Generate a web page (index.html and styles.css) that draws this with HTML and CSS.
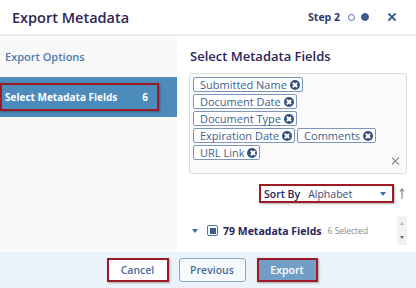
FILE: index.html
```html
<!DOCTYPE html>
<html lang="en">
<head>
  <meta charset="UTF-8"/>
  <title>Export Metadata</title>
  <link rel="stylesheet" href="styles.css">
</head>
<body>
<header class="top">
  <h1>Export Metadata</h1>
  <div class="steps">
    <span class="step-label">Step 2</span>
    <span class="dot"></span>
    <span class="dot on"></span>
    <span class="close"></span>
  </div>
</header>

<div class="content">
  <!-- left wizard nav -->
  <aside class="sidebar">
    <div class="nav-item">Export Options</div>
    <div class="nav-band">
      <div class="nav-active">
        <span>Select Metadata Fields</span>
        <span>6</span>
      </div>
    </div>
  </aside>

  <main class="panel">
    <h2>Select Metadata Fields</h2>

    <div class="tag-box">
      <div class="tags">
        <span class="chip">Submitted Name <i class="x"></i></span>
        <span class="chip">Document Date <i class="x"></i></span>
        <span class="chip">Document Type <i class="x"></i></span>
        <span class="chip">Expiration Date <i class="x"></i></span>
        <span class="chip">Comments <i class="x"></i></span>
        <span class="chip">URL Link <i class="x"></i></span>
      </div>
      <span class="clear"></span>
    </div>

    <div class="sort-row">
      <div class="sort">
        <b>Sort By</b>
        <span class="sort-val">Alphabet</span>
        <span class="caret"></span>
      </div>
      <svg class="sort-dir" width="6" height="12" viewBox="0 0 6 12">
        <path d="M3 1 V11 M1 3.5 L3 1 L5 3.5" stroke="#888" stroke-width="1.2" fill="none"/>
      </svg>
    </div>

    <div class="tree-row">
      <span class="caret tree-caret"></span>
      <span class="check"><span></span></span>
      <b class="count">79 Metadata Fields</b>
      <span class="selected">6 Selected</span>
      <div class="scroll">
        <span class="up"></span>
        <span class="down"></span>
      </div>
    </div>
  </main>
</div>

<footer class="bottom">
  <button class="btn cancel">Cancel</button>
  <button class="btn prev">Previous</button>
  <button class="btn export">Export</button>
</footer>
</body>
</html>
```

FILE: styles.css
```css
body {
  margin: 0;
  width: 416px;
  height: 288px;
  overflow: hidden;
  font-family: 'Open Sans', sans-serif;
  color: #2b2a55;
  background: #fff;
}

.top {
  height: 34px;
  border-bottom: 2px solid #e9edf3;
  display: flex;
  align-items: center;
  justify-content: space-between;
  padding: 0 20px 0 12px;
}

.top h1 {
  margin: 0;
  font-size: 14.5px;
  font-weight: 600;
  color: #2a2656;
}

.steps {
  display: flex;
  align-items: center;
  gap: 6px;
}

.step-label {
  font-size: 10.5px;
  font-weight: 700;
  color: #2f3a66;
  margin-right: 2px;
}

.dot {
  width: 7px;
  height: 7px;
  border: 1px solid #4a6e9c;
  border-radius: 50%;
  box-sizing: border-box;
}

.dot.on {
  background: #3d5f8e;
  border-color: #3d5f8e;
  width: 8px;
  height: 8px;
}

.close {
  width: 8px;
  height: 8px;
  margin-left: 13px;
  position: relative;
}

.close::before,
.close::after,
.clear::before,
.clear::after {
  content: '';
  position: absolute;
  left: 3px;
  top: -1px;
  width: 2.2px;
  height: 10px;
  background: #3d5f8e;
  transform: rotate(45deg);
}

.close::after,
.clear::after {
  transform: rotate(-45deg);
}

.content {
  display: flex;
  height: 216px;
}

.sidebar {
  width: 177px;
  background: #f9f9f9;
  padding-top: 13px;
}

.nav-item {
  font-size: 11px;
  font-weight: 600;
  line-height: 16px;
  color: #5079b0;
  padding-left: 5px;
}

.nav-band {
  margin-top: 12px;
  height: 40px;
  background: #4c8bbb;
  padding-top: 6px;
  box-sizing: border-box;
}

.nav-active {
  width: 159px;
  height: 28px;
  box-sizing: border-box;
  border: 2px solid #9a1b24;
  box-shadow: 1px 1px 2px rgba(0,0,0,0.3);
  display: flex;
  align-items: center;
  justify-content: space-between;
  padding: 0 9px 0 3px;
  color: #fff;
  font-size: 10px;
  font-weight: 700;
}

.panel {
  flex: 1;
  padding: 11px 9px 0 12px;
}

.panel h2 {
  margin: 0 0 0 1px;
  font-size: 13px;
  font-weight: 600;
  line-height: 19px;
  color: #2a2656;
}

.tag-box {
  margin-top: 7px;
  height: 101px;
  box-sizing: border-box;
  border: 1px solid #dcdcdc;
  border-radius: 3px;
  background: #fafafa;
  padding: 3px 3px;
  position: relative;
}

.tags {
  display: flex;
  flex-wrap: wrap;
  gap: 2px 2px;
  width: 185px;
}

.chip {
  height: 15px;
  box-sizing: border-box;
  border: 1px solid #7d97bb;
  border-radius: 2px;
  background: #fff;
  font-size: 11px;
  line-height: 13px;
  color: #3f5f8d;
  padding: 0 2px 0 6px;
  display: flex;
  align-items: center;
  gap: 3px;
  white-space: nowrap;
}

.x {
  width: 10px;
  height: 10px;
  border-radius: 50%;
  background: #34507c;
  position: relative;
}

.x::before,
.x::after {
  content: '';
  position: absolute;
  left: 4.3px;
  top: 2px;
  width: 1.6px;
  height: 6px;
  background: #fff;
  transform: rotate(45deg);
}

.x::after {
  transform: rotate(-45deg);
}

.clear {
  position: absolute;
  right: 7px;
  bottom: 8px;
  width: 8px;
  height: 8px;
}

.clear::before,
.clear::after {
  background: #7a7a7a;
  width: 1.3px;
  left: 3.5px;
}

.sort-row {
  display: flex;
  justify-content: flex-end;
  align-items: center;
  gap: 5px;
  margin-top: 10px;
}

.sort {
  width: 135px;
  height: 19px;
  box-sizing: border-box;
  border: 2px solid #9a1b24;
  box-shadow: 1px 1px 2px rgba(0,0,0,0.3);
  display: flex;
  align-items: center;
  padding: 0 6px 0 3px;
  font-size: 10.5px;
  background: #fff;
}

.sort b {
  font-weight: 600;
  color: #2a2656;
}

.sort-val {
  margin-left: 8px;
  flex: 1;
  color: #3d4d75;
}

.caret {
  width: 0;
  height: 0;
  border-left: 3px solid transparent;
  border-right: 3px solid transparent;
  border-top: 4px solid #3b6aa5;
}

.sort-dir {
  margin-right: 2px;
}

.tree-row {
  display: flex;
  align-items: center;
  margin-top: 13px;
  padding-left: 3px;
  height: 29px;
}

.tree-caret {
  border-top-color: #2f6db2;
  margin-right: 9px;
}

.check {
  width: 11px;
  height: 11px;
  box-sizing: border-box;
  border: 1px solid #4d74a8;
  border-radius: 2px;
  display: flex;
  align-items: center;
  justify-content: center;
  margin-right: 5px;
}

.check span {
  width: 6px;
  height: 6px;
  background: #3a5d90;
}

.count {
  font-size: 10.5px;
  font-weight: 700;
  color: #2a2656;
}

.selected {
  font-size: 8.5px;
  color: #8a8a8a;
  margin-left: 6px;
  flex: 1;
}

.scroll {
  width: 10px;
  height: 29px;
  background: #f1f1f1;
  display: flex;
  flex-direction: column;
  align-items: center;
  justify-content: space-around;
}

.scroll .up {
  border-left: 2.5px solid transparent;
  border-right: 2.5px solid transparent;
  border-bottom: 3px solid #b8b8b8;
}

.scroll .down {
  border-left: 2.5px solid transparent;
  border-right: 2.5px solid transparent;
  border-top: 3px solid #666;
}

.bottom {
  height: 36px;
  background: #ebf2f9;
  display: flex;
  align-items: center;
  justify-content: center;
  gap: 10px;
  padding-left: 8px;
}

.btn {
  height: 24px;
  box-sizing: border-box;
  font-family: 'Open Sans', sans-serif;
  font-size: 10.5px;
  font-weight: 600;
  padding: 0;
}

.cancel {
  width: 62px;
  background: #fff;
  color: #4b6c98;
  border: 2px solid #9a1b24;
  box-shadow: 1px 1px 2px rgba(0,0,0,0.3);
}

.prev {
  width: 67px;
  background: #f7fafd;
  color: #4b6c98;
  border: 1px solid #86a8cc;
  border-radius: 3px;
}

.export {
  width: 61px;
  margin-left: 1px;
  background: #729ec6;
  color: #fff;
  border: 2px solid #9a1b24;
  box-shadow: 1px 1px 2px rgba(0,0,0,0.3);
}
```
